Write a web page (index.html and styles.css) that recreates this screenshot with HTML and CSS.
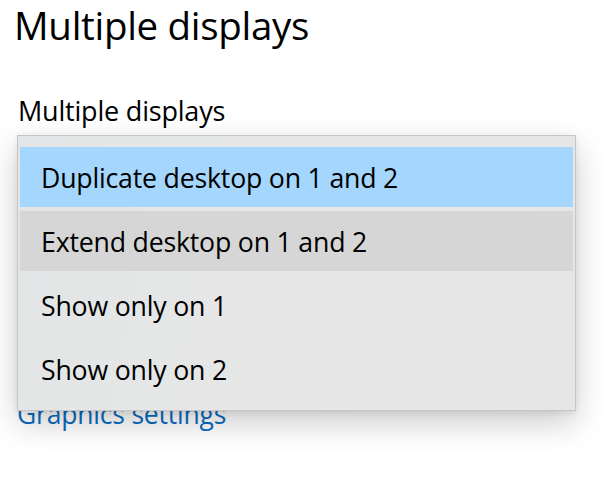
FILE: index.html
```html
<!DOCTYPE html>
<html lang="en">
<head>
<meta charset="utf-8">
<title>Multiple displays</title>
<link rel="stylesheet" href="styles.css">
</head>
<body>
<main class="page">
  <h1 class="title">Multiple displays</h1>
  <div class="field">
    <div class="label">Multiple displays</div>
    <div class="combo"></div>
    <a class="link" href="#">Graphics settings</a>
    <ul class="menu">
      <li class="item selected">Duplicate desktop on 1 and 2</li>
      <li class="item hover">Extend desktop on 1 and 2</li>
      <li class="item">Show only on 1</li>
      <li class="item">Show only on 2</li>
    </ul>
  </div>
</main>
</body>
</html>
```
FILE: styles.css
```css
html, body {
  margin: 0;
  padding: 0;
  background: #ffffff;
}
body {
  font-family: "Open Sans", "Noto Sans", sans-serif;
  color: #000;
  width: 603px;
  height: 477px;
  overflow: hidden;
}
.page {
  padding: 0 0 0 14px;
}
.title {
  margin: 0;
  padding-top: 2px;
  font-size: 38.5px;
  font-weight: 400;
  line-height: 46px;
  letter-spacing: -0.3px;
}
.field {
  position: relative;
  padding-top: 46px;
}
.label {
  margin-left: 4px;
  font-size: 27px;
  line-height: 34px;
  letter-spacing: -0.2px;
}
.combo {
  height: 269px;
}
.link {
  display: block;
  margin-left: 3px;
  font-size: 26.5px;
  line-height: 34px;
  color: #0a6cc2;
  text-decoration: none;
  letter-spacing: -0.2px;
}
.menu {
  position: absolute;
  left: 3px;
  top: 87px;
  width: 553px;
  margin: 0;
  padding: 11px 2px 11px 2px;
  list-style: none;
  border: 1px solid #c6c6c6;
  background: linear-gradient(100deg, #e3e5e6 0%, #e7e7e7 60%, #e6e6e6 100%);
  box-shadow: 0 12px 30px rgba(0, 0, 0, 0.2), 0 2px 6px rgba(0, 0, 0, 0.08);
  display: flex;
  flex-direction: column;
  gap: 4px;
}
.item {
  height: 60px;
  display: flex;
  align-items: center;
  padding-left: 21px;
  font-size: 26.7px;
  letter-spacing: -0.2px;
}
.item.selected {
  background: #a5d6fd;
}
.item.hover {
  background: #d6d6d6;
}
```
